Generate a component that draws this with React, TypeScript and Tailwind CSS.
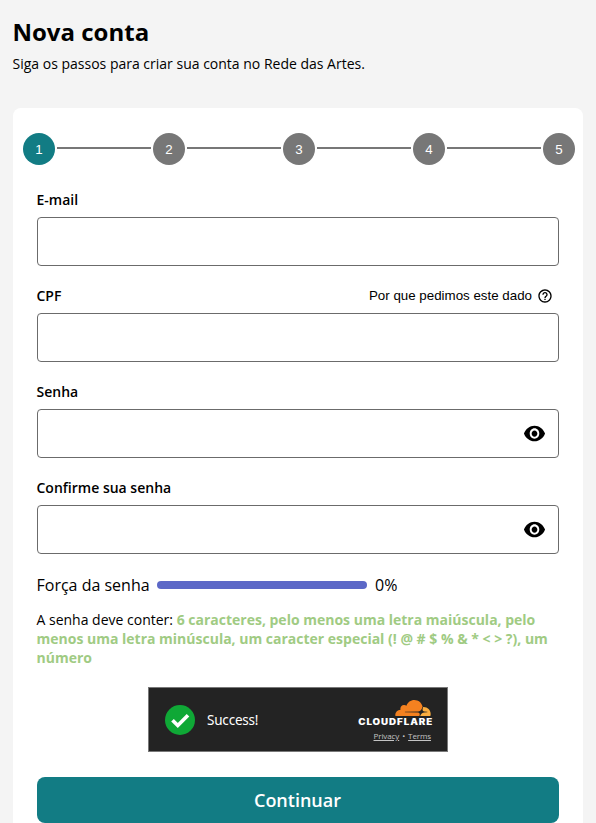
const STEPS = [1, 2, 3, 4, 5];

function Stepper() {
  return (
    <div className="-mr-4 -ml-3.5 flex items-center">
      {STEPS.map((n) => (
        <div key={n} className="contents">
          {n > 1 && <div className="mx-0.5 mb-0.5 h-0.5 flex-1 bg-[#777777]" />}
          <div
            className={`flex size-8 shrink-0 items-center justify-center rounded-full pt-px font-['Liberation_Sans',sans-serif] text-[13.33px] text-white ${
              n === 1 ? "bg-[#127c84]" : "bg-[#777777]"
            }`}
          >
            {n}
          </div>
        </div>
      ))}
    </div>
  );
}

function HelpIcon() {
  return (
    <svg viewBox="0 0 24 24" className="size-4" fill="currentColor">
      <path d="M11 18h2v-2h-2v2zm1-16C6.48 2 2 6.48 2 12s4.48 10 10 10 10-4.48 10-10S17.52 2 12 2zm0 18c-4.41 0-8-3.59-8-8s3.59-8 8-8 8 3.59 8 8-3.59 8-8 8zm0-14c-2.21 0-4 1.79-4 4h2c0-1.1.9-2 2-2s2 .9 2 2c0 2-3 1.75-3 5h2c0-2.25 3-2.5 3-5 0-2.21-1.79-4-4-4z" />
    </svg>
  );
}

function EyeIcon() {
  return (
    <svg viewBox="0 0 24 24" className="mb-px h-[25px] w-[23px]" preserveAspectRatio="none" fill="currentColor">
      <path d="M12 4.5C7 4.500 2.730 7.610 1 12c1.730 4.390 6 7.500 11 7.500s9.270-3.110 11-7.500c-1.730-4.390-6-7.500-11-7.500zM12 17c-2.760 0-5-2.240-5-5s2.240-5 5-5 5 2.240 5 5-2.240 5-5 5zm0-8c-1.660 0-3 1.340-3 3s1.340 3 3 3 3-1.340 3-3-1.340-3-3-3z" />
    </svg>
  );
}

function CloudflareMark() {
  return (
    <svg viewBox="0 6.57 24 10.86" className="mr-px h-4 w-[36px]">
      <path
        fill="#f48120"
        d="M16.5088 16.8447c.1475-.5068.0908-.9707-.1553-1.3154-.2246-.3164-.6045-.499-1.0615-.5205l-8.6592-.1123a.1559.1559 0 0 1-.1333-.0713c-.0283-.042-.0351-.0986-.021-.1553.0278-.084.1123-.1484.2036-.1562l8.7359-.1123c1.0351-.0489 2.1601-.8868 2.5537-1.9136l.499-1.3013c.0215-.0561.0293-.1128.0147-.168-.5625-2.5463-2.835-4.4453-5.5499-4.4453-2.5039 0-4.6284 1.6177-5.3876 3.8614-.4927-.3658-1.1187-.5625-1.794-.499-1.2026.119-2.1665 1.083-2.2861 2.2856-.0283.31-.0069.6128.0635.894C1.5683 13.171 0 14.7754 0 16.752c0 .1748.0142.3515.0352.5273.0141.083.0844.1475.1689.1475h15.9814c.0909 0 .1758-.0645.2032-.1553l.12-.4268z"
      />
      <path
        fill="#faad3f"
        d="M19.2656 11.2813c-.0771 0-.1611 0-.2383.0112-.0566 0-.1054.0415-.127.0976l-.3378 1.1744c-.1475.5068-.0918.9707.1543 1.3164.2256.3164.6055.498 1.0625.5195l1.8437.1133c.0557 0 .1055.0263.1329.0703.0283.043.0351.1074.0214.1562-.0283.084-.1132.1485-.204.1553l-1.921.1123c-1.041.0488-2.1582.8867-2.5527 1.914l-.1406.3585c-.0283.0713.0215.1416.0986.1416h6.5977c.0771 0 .1474-.0489.169-.126.1122-.4082.1757-.837.1757-1.2803 0-2.6025-2.125-4.727-4.7344-4.727z"
      />
    </svg>
  );
}

function Field({ label, help, password }: { label: string; help?: boolean; password?: boolean }) {
  return (
    <div className="mb-5">
      <div className="mb-2 flex h-[19px] items-center justify-between">
        <label className="-ml-[0.5px] text-sm leading-[19px] font-semibold">{label}</label>
        {help && (
          <span className="mr-1.5 flex items-center gap-[5px] font-['Liberation_Sans',sans-serif] text-[13.33px]">
            Por que pedimos este dado
            <HelpIcon />
          </span>
        )}
      </div>
      <div className="flex h-[49px] items-center justify-end rounded border border-[#6b6b6b] bg-white pr-3">
        {password && <EyeIcon />}
      </div>
    </div>
  );
}

function Turnstile() {
  return (
    <div className="mx-auto flex h-[65px] w-[300px] items-center justify-between border border-[#797979] bg-[#232323] pr-[15px] pl-4 text-white">
      <div className="flex items-center gap-3">
        <svg viewBox="0 0 30 30" className="size-[30px]">
          <circle cx="15" cy="15" r="15" fill="#0fa836" />
          <path d="M7.500 15.200l5.300 5.300L23 10.300" fill="none" stroke="#fff" strokeWidth="3.700" />
        </svg>
        <span className="pt-0.5 font-['Noto_Sans',sans-serif] text-[13.5px] tracking-[-0.2px]">Success!</span>
      </div>
      <div className="flex flex-col items-end pt-0.5">
        <CloudflareMark />
        <span className="mt-0.5 -mr-px origin-right scale-x-[1.15] font-['Inter',sans-serif] text-[8.5px] leading-[8px] font-black tracking-[0.8px]">
          CLOUDFLARE
        </span>
        <div className="mt-1 mr-px flex gap-[3px] font-['Open_Sans',sans-serif] text-[8px] leading-[11px] tracking-[-0.1px] text-[#c4c4c4]">
          <span className="underline">Privacy</span>
          <span>•</span>
          <span className="underline">Terms</span>
        </div>
      </div>
    </div>
  );
}

export default function App() {
  return (
    <div className="h-[823px] overflow-hidden bg-[#f4f4f4] px-[13px] pt-[15px] font-['Open_Sans',sans-serif] text-black">
      <h1 className="-ml-[0.5px] text-2xl leading-[33px] font-bold">Nova conta</h1>
      <p className="mt-1.5 -ml-[0.5px] text-sm leading-[19px]">Siga os passos para criar sua conta no Rede das Artes.</p>

      <main className="mt-[35px] h-[740px] rounded-lg bg-white px-6 pt-[25px]">
        <Stepper />
        <form className="mt-[25px]">
          <Field label="E-mail" />
          <Field label="CPF" help />
          <Field label="Senha" password />
          <Field label="Confirme sua senha" password />

          <div className="-ml-[0.5px] flex h-[22px] items-center gap-2 text-base leading-[22px]">
            <span>Força da senha</span>
            <div className="-ml-[0.5px] h-2 w-[210px] rounded-full bg-[#5c68c7]" />
            <span>0%</span>
          </div>

          <p className="mt-3.5 -ml-[0.5px] text-sm leading-[19px]">
            A senha deve conter:{" "}
            <strong className="font-bold text-[#a0cb83]">
              6 caracteres, pelo menos uma letra maiúscula, pelo menos uma letra minúscula, um caracter especial (! @ # $
              % &amp; * &lt; &gt; ?), um número
            </strong>
          </p>

          <div className="mt-5">
            <Turnstile />
          </div>

          <button
            type="button"
            className="mt-[25px] h-[46px] w-full rounded-lg bg-[#127c84] pr-px text-lg font-semibold text-white"
          >
            Continuar
          </button>
        </form>
      </main>
    </div>
  );
}
